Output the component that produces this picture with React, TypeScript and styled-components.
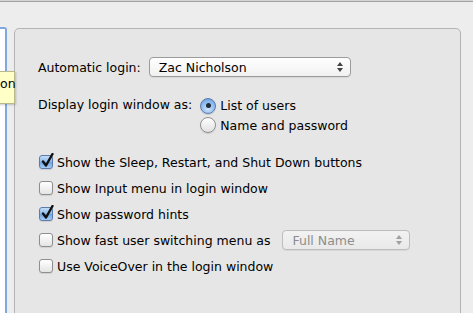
import styled, { createGlobalStyle } from 'styled-components';

const GlobalStyle = createGlobalStyle`
  html, body {
    margin: 0;
    padding: 0;
    background: #ededed;
  }
  * {
    box-sizing: border-box;
  }
`;

const Window = styled.div`
  position: relative;
  width: 473px;
  height: 313px;
  overflow: hidden;
  background: #ededed;
  font-family: 'DejaVu Sans', 'Liberation Sans', sans-serif;
  font-size: 12.5px;
  color: #000;
  display: flex;
  flex-direction: column;
`;

const TopEdge = styled.div`
  height: 2px;
  border-top: 1px solid #d4d4d4;
  border-bottom: 1px solid #a2a2a2;
`;

const Body = styled.div`
  flex: 1;
  display: flex;
  flex-direction: row;
  align-items: flex-start;
`;

const ListPanel = styled.div`
  width: 7px;
  height: 300px;
  margin-top: 25px;
  background: #fff;
  border-right: 2px solid #7fa9de;
  border-top: 2px solid #7fa9de;
  border-top-right-radius: 3px;
`;

const Group = styled.div`
  width: 447px;
  height: 300px;
  margin-left: 7px;
  margin-top: 26px;
  padding: 28px 0 0 23px;
  background: #e6e6e6;
  border: 1px solid #b4b4b4;
  border-radius: 5px;
  display: flex;
  flex-direction: column;
`;

const Row = styled.div<{ $height?: number }>`
  display: flex;
  flex-direction: row;
  align-items: center;
  height: ${(p) => p.$height ?? 26}px;
  white-space: nowrap;
`;

const Label = styled.span<{ $gap?: number }>`
  margin-right: ${(p) => p.$gap ?? 8}px;
`;

const Popup = styled.div<{ $width: number; $disabled?: boolean }>`
  position: relative;
  width: ${(p) => p.$width}px;
  height: 20px;
  padding-left: 9px;
  display: flex;
  align-items: center;
  border: 1px solid ${(p) => (p.$disabled ? '#bdbdbd' : '#9b9b9b')};
  border-radius: 4px;
  background: ${(p) =>
    p.$disabled
      ? 'linear-gradient(#f2f2f2, #e9e9e9)'
      : 'linear-gradient(#ffffff, #f1f1f1)'};
  box-shadow: 0 1px 0 rgba(0, 0, 0, 0.06);
  color: ${(p) => (p.$disabled ? '#8d8d8d' : '#000')};
`;

const PopupArrows = styled.svg`
  position: absolute;
  right: 7px;
  top: 4px;
`;

const Spacer = styled.div<{ $size: number }>`
  height: ${(p) => p.$size}px;
  flex-shrink: 0;
`;

const RadioGroup = styled.div`
  display: flex;
  flex-direction: column;
`;

const RadioRow = styled.div`
  display: flex;
  align-items: center;
  height: 19.5px;
`;

const RadioCircle = styled.span<{ $on?: boolean }>`
  width: 16px;
  height: 16px;
  margin-right: 4px;
  border-radius: 50%;
  border: 1px solid ${(p) => (p.$on ? '#5a7bab' : '#8f8f8f')};
  background: ${(p) =>
    p.$on
      ? 'radial-gradient(circle at 50% 70%, #cfe3fb 0%, #8fbcef 55%, #5d92d6 100%)'
      : 'linear-gradient(#fdfdfd, #e2e2e2)'};
  box-shadow: 0 1px 1px rgba(0, 0, 0, 0.12);
  display: flex;
  align-items: center;
  justify-content: center;
  &::after {
    content: '';
    display: ${(p) => (p.$on ? 'block' : 'none')};
    width: 5px;
    height: 5px;
    border-radius: 50%;
    background: #1d2a3a;
  }
`;

const CheckList = styled.div`
  display: flex;
  flex-direction: column;
  padding-left: 1px;
`;

const Box = styled.span<{ $on?: boolean }>`
  position: relative;
  width: 14px;
  height: 14px;
  margin-right: 4px;
  flex-shrink: 0;
  border-radius: 3px;
  border: 1px solid ${(p) => (p.$on ? '#5a7bab' : '#8e8e8e')};
  background: ${(p) =>
    p.$on
      ? 'linear-gradient(#c4dcf7, #8ab8ec 50%, #6aa2e2 51%, #a7cdf5)'
      : 'linear-gradient(#ffffff, #e4e4e4)'};
  box-shadow: 0 1px 1px rgba(0, 0, 0, 0.1);
`;

const Check = styled.svg`
  position: absolute;
  left: 1px;
  top: -3px;
`;

const Tooltip = styled.div`
  position: absolute;
  left: -40px;
  top: 71px;
  width: 55px;
  height: 33px;
  padding: 4px 0 0 39px;
  background: #ffffc7;
  border: 1px solid #b9b98e;
  box-shadow: 1px 1px 2px rgba(0, 0, 0, 0.2);
  line-height: 16px;
`;

const Arrows = ({ color }: { color: string }) => (
  <PopupArrows width="6" height="10" viewBox="0 0 6 10">
    <path d="M3 0 L6 4 L0 4 Z" fill={color} />
    <path d="M3 10 L6 6 L0 6 Z" fill={color} />
  </PopupArrows>
);

const CheckBox = ({ on }: { on?: boolean }) => (
  <Box $on={on}>
    {on && (
      <Check width="13" height="15" viewBox="0 0 13 15">
        <path
          d="M2 8.5 L5 12.5 L11.5 1"
          stroke="#111"
          strokeWidth="2.4"
          fill="none"
          strokeLinecap="round"
          strokeLinejoin="round"
        />
      </Check>
    )}
  </Box>
);

const App = () => {
  return (
    <Window>
      <GlobalStyle />
      <TopEdge />
      <Body>
        <ListPanel />
        <Group>
          <Row $height={20}>
            <Label>Automatic login:</Label>
            <Popup $width={202}>
              Zac Nicholson
              <Arrows color="#444" />
            </Popup>
          </Row>
          <Spacer $size={19} />
          <Row $height={39} style={{ alignItems: 'flex-start' }}>
            <Label style={{ lineHeight: '17px' }}>Display login window as:</Label>
            <RadioGroup>
              <RadioRow>
                <RadioCircle $on />
                List of users
              </RadioRow>
              <RadioRow>
                <RadioCircle />
                Name and password
              </RadioRow>
            </RadioGroup>
          </Row>
          <Spacer $size={14} />
          <CheckList>
            <Row>
              <CheckBox on />
              Show the Sleep, Restart, and Shut Down buttons
            </Row>
            <Row>
              <CheckBox />
              Show Input menu in login window
            </Row>
            <Row>
              <CheckBox on />
              Show password hints
            </Row>
            <Row>
              <CheckBox />
              <Label $gap={12}>Show fast user switching menu as</Label>
              <Popup $width={128} $disabled>
                Full Name
                <Arrows color="#a0a0a0" />
              </Popup>
            </Row>
            <Row>
              <CheckBox />
              Use VoiceOver in the login window
            </Row>
          </CheckList>
        </Group>
      </Body>
      <Tooltip>on</Tooltip>
    </Window>
  );
};

export default App;
